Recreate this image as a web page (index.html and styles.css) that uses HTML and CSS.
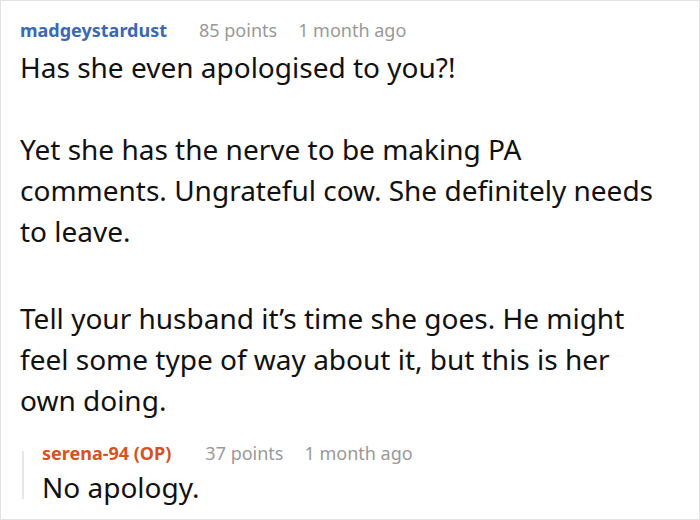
FILE: index.html
```html
<!DOCTYPE html>
<html>
<head>
<meta charset="utf-8">
<link rel="stylesheet" href="styles.css">
</head>
<body>
<div class="frame">
  <div class="comment">
    <div class="meta">
      <span class="user">madgeystardust</span>
      <span class="info">85 points</span>
      <span class="info">1 month ago</span>
    </div>
    <div class="body">
      <p>Has she even apologised to you?!</p>
      <p class="gap-lg">Yet she has the nerve to be making PA comments. Ungrateful cow. She definitely needs to leave.</p>
      <p>Tell your husband it’s time she goes. He might feel some type of way about it, but this is her own doing.</p>
    </div>
    <div class="reply">
      <div class="meta">
        <span class="user op">serena-94 (OP)</span>
        <span class="info">37 points</span>
        <span class="info">1 month ago</span>
      </div>
      <div class="body">
        <p>No apology.</p>
      </div>
    </div>
  </div>
</div>
</body>
</html>
```

FILE: styles.css
```css
html, body { margin: 0; padding: 0; background: #fff; }
.frame {
  width: 700px; height: 520px; box-sizing: border-box;
  border: 1px solid #e2e2e2;
  font-family: "Noto Sans", sans-serif;
  overflow: hidden;
}
.comment { padding: 16px 40px 0 19px; }
.meta { display: flex; align-items: baseline; gap: 21px; font-size: 18px; line-height: 26px; }
.user { font-weight: bold; color: #3a68b4; margin-right: 11px; }
.user.op { color: #d5531f; margin-right: 13px; }
.info { color: #999; }
.body { font-size: 28px; line-height: 41px; color: #111; margin-top: 4px; }
.body p { margin: 0 0 41px 0; }
.body p.gap-lg { margin-bottom: 46px; }
.body p:last-child { margin-bottom: 0; }
.reply {
  margin-top: 19px;
  padding-left: 22px;
  background: linear-gradient(#e6e6e6, #e6e6e6) no-repeat 2px 11px / 2px 48px;
}
.reply .body { margin-top: 1px; }
```
